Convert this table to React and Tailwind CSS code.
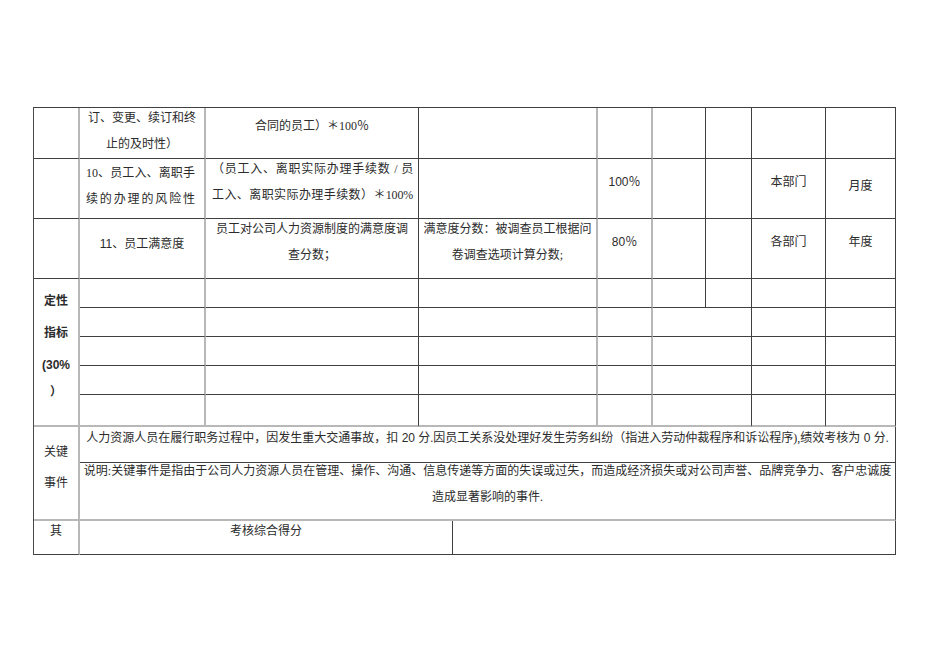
import React from 'react';

// right-border type of each of the nine columns: g = grey, d = dark
const colRight = ['g', 'g', 'd', 'g', 'g', 'd', 'd', 'd', 'd'];
const colWidths = [46, 126, 213, 179, 55, 53, 46, 74, 70];

const serif = "font-['Liberation_Serif','Noto_Sans_CJK_SC',serif]";
const sans = "font-['Liberation_Sans','Noto_Sans_CJK_SC',sans-serif]";

function borders(r, b) {
  const right = r === 'g' ? 'border-r-2 border-r-[#b8b8b8]' : 'border-r border-r-[#404040]';
  const bottom = b === 'g' ? 'border-b-2 border-b-[#b8b8b8]' : 'border-b border-b-[#404040]';
  return right + ' ' + bottom;
}

function Td({ r = 'd', b = 'd', colSpan, rowSpan, className = '', children }) {
  return (
    <td colSpan={colSpan} rowSpan={rowSpan} className={`p-0 align-top ${borders(r, b)} ${className}`}>
      {children}
    </td>
  );
}

function EmptyRow({ h, b = 'd', merged = false }) {
  const cols = merged ? [1, 2, 3, 4, 5, 7, 8] : [1, 2, 3, 4, 5, 6, 7, 8];
  return (
    <tr className={h}>
      {cols.map((c) => (
        <Td key={c} r={merged && c === 5 ? 'd' : colRight[c]} b={b} colSpan={merged && c === 5 ? 2 : undefined} />
      ))}
    </tr>
  );
}

export default function App() {
  return (
    <div className={`min-h-[672px] bg-white pt-[107px] pl-[33px] text-[12px] text-[#2b2b2b] ${serif}`}>
      <table className="table-fixed border-separate border-spacing-0 border-l border-t border-l-[#4a4a4a] border-t-[#404040] w-[863px]">
        <colgroup>
          {colWidths.map((w, i) => (
            <col key={i} style={{ width: w }} />
          ))}
        </colgroup>
        <tbody>
          {/* row 9 (continued) */}
          <tr className="h-[51px]">
            <Td r="g" />
            <Td r="g">
              <div className="-mt-[3px] leading-[26px] text-center whitespace-nowrap">
                订、变更、续订和终<br />止的及时性）
              </div>
            </Td>
            <Td r="d">
              <div className="mt-[5px] leading-[26px] text-center whitespace-nowrap">合同的员工）＊100％</div>
            </Td>
            <Td r="g" />
            <Td r="g" />
            <Td r="d" />
            <Td r="d" />
            <Td r="d" />
            <Td r="d" />
          </tr>

          {/* row 10 */}
          <tr className="h-[60px]">
            <Td r="g" />
            <Td r="g">
              <div className="mt-[1px] pl-[6px] pr-[9px] leading-[26px] text-justify [text-align-last:justify]">
                10、员工入、离职手<br />续的办理的风险性
              </div>
            </Td>
            <Td r="d">
              <div className="-mt-[3px] pl-[6px] pr-[5px] leading-[26px] text-justify [text-align-last:justify] tracking-[-0.2px]">
                （员工入、离职实际办理手续数 / 员<br />工入、离职实际办理手续数）＊100%
              </div>
            </Td>
            <Td r="g" />
            <Td r="g">
              <div className={`mt-[10px] leading-[26px] text-center ${sans}`}>100％</div>
            </Td>
            <Td r="d" />
            <Td r="d" />
            <Td r="d">
              <div className="mt-[10px] leading-[26px] text-center">本部门</div>
            </Td>
            <Td r="d">
              <div className="mt-[14px] leading-[26px] text-center">月度</div>
            </Td>
          </tr>

          {/* row 11 */}
          <tr className="h-[60px]">
            <Td r="g" />
            <Td r="g">
              <div className="mt-[12px] leading-[26px] text-center whitespace-nowrap">
                <span className={sans}>11</span>、员工满意度
              </div>
            </Td>
            <Td r="d">
              <div className="-mt-[3px] leading-[26px] text-center whitespace-nowrap">
                员工对公司人力资源制度的满意度调<br />查分数；
              </div>
            </Td>
            <Td r="g">
              <div className="-mt-[3px] leading-[26px] text-center whitespace-nowrap">
                满意度分数：被调查员工根据问<br />卷调查选项计算分数;
              </div>
            </Td>
            <Td r="g">
              <div className={`mt-[10px] leading-[26px] text-center ${sans}`}>80％</div>
            </Td>
            <Td r="d" />
            <Td r="d" />
            <Td r="d">
              <div className="mt-[10px] leading-[26px] text-center">各部门</div>
            </Td>
            <Td r="d">
              <div className="mt-[10px] leading-[26px] text-center">年度</div>
            </Td>
          </tr>

          {/* qualitative indicators */}
          <tr className="h-[29px]">
            <Td r="g" b="g" rowSpan={5}>
              <div className={`mt-[6px] text-center font-bold whitespace-nowrap ${sans}`}>
                <div className="leading-[32px]">定性</div>
                <div className="leading-[32px]">指标</div>
                <div className="leading-[32px]">(30%</div>
                <div className="leading-[22px]">）</div>
              </div>
            </Td>
            {[1, 2, 3, 4, 5, 6, 7, 8].map((c) => (
              <Td key={c} r={colRight[c]} />
            ))}
          </tr>
          <EmptyRow h="h-[29px]" merged />
          <EmptyRow h="h-[29px]" merged />
          <EmptyRow h="h-[29px]" merged />
          <EmptyRow h="h-[32px]" merged b="g" />

          {/* key events */}
          <tr className="h-[36px]">
            <Td r="g" b="g" rowSpan={2}>
              <div className="mt-[10px] leading-[31px] text-center whitespace-nowrap">
                关键<br />事件
              </div>
            </Td>
            <Td r="d" colSpan={8}>
              <div className="mt-[1px] leading-[20px] text-center whitespace-nowrap">
                人力资源人员在履行职务过程中，因发生重大交通事故，扣<span className={sans}> 20 </span>分.因员工关系没处理好发生劳务纠纷（指进入劳动仲裁程序和诉讼程序),绩效考核为<span className={sans}> 0 </span>分.
              </div>
            </Td>
          </tr>
          <tr className="h-[58px]">
            <Td r="d" b="g" colSpan={8}>
              <div className="-mt-[5px] leading-[26px] text-center whitespace-nowrap">
                说明:关键事件是指由于公司人力资源人员在管理、操作、沟通、信息传递等方面的失误或过失，而造成经济损失或对公司声誉、品牌竞争力、客户忠诚度
                <br />
                造成显著影响的事件.
              </div>
            </Td>
          </tr>

          {/* total score */}
          <tr className="h-[34px]">
            <Td r="g">
              <div className="leading-[20px] text-center">其</div>
            </Td>
            <Td r="d" colSpan={8} className="h-full">
              <div className="flex h-[33px]">
                <div className="w-[373px] border-r border-r-[#404040] leading-[20px] text-center">考核综合得分</div>
                <div className="flex-1" />
              </div>
            </Td>
          </tr>
        </tbody>
      </table>
    </div>
  );
}
